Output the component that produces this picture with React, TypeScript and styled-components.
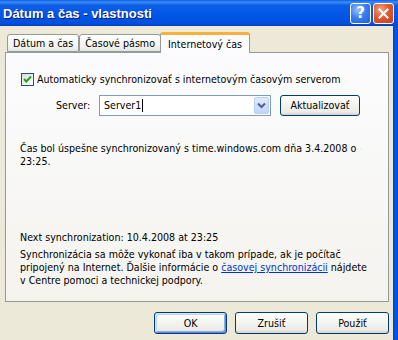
import React from "react";
import styled, { createGlobalStyle } from "styled-components";

const Global = createGlobalStyle`
  html, body { margin: 0; padding: 0; background: #ece9d8; }
  body { font-family: "DejaVu Sans Condensed", "DejaVu Sans", sans-serif; font-stretch: condensed; font-size: 10.6px; color: #000; }
`;

const Window = styled.div`
  width: 398px;
  height: 340px;
  display: flex;
  flex-direction: column;
  overflow: hidden;
`;

const TitleBar = styled.div`
  height: 26px;
  flex: none;
  display: flex;
  align-items: center;
  padding: 0 4px 0 3px;
  background: linear-gradient(#0a5fe6 0%, #3d8cf8 8%, #0d5fe8 20%, #0055e5 60%, #0050dc 90%, #003fc4 100%);
`;

const Title = styled.div`
  flex: 1;
  color: #fff;
  font-family: "Liberation Sans", sans-serif;
  font-stretch: normal;
  font-weight: bold;
  font-size: 13px;
  text-shadow: 1px 1px 0 #0a1883;
  padding-top: 1px;
`;

const CaptionButton = styled.div<{ $red?: boolean }>`
  width: 21px;
  height: 21px;
  box-sizing: border-box;
  margin-left: 2px;
  border: 1px solid #fff;
  border-radius: 3px;
  display: flex;
  align-items: center;
  justify-content: center;
  background: ${(p) =>
    p.$red
      ? "radial-gradient(circle at 35% 30%, #f0a58a 0%, #e0582e 45%, #c8401a 100%)"
      : "radial-gradient(circle at 35% 30%, #9cc0fb 0%, #3c7df2 45%, #1d5fe0 100%)"};
  color: #fff;
  font-family: "DejaVu Sans", sans-serif;
  font-stretch: normal;
  font-weight: bold;
  font-size: 15px;
`;

const Client = styled.div`
  flex: 1;
  display: flex;
  flex-direction: column;
  padding: 6px 5px 0 5px;
  border-right: 4px solid #0054e3;
  box-shadow: inset -1px 0 0 #0a3fb8;
`;

const TabStrip = styled.div`
  display: flex;
  align-items: flex-end;
  height: 20px;
  padding-left: 2px;
  position: relative;
  z-index: 1;
`;

const Tab = styled.div<{ $active?: boolean }>`
  box-sizing: border-box;
  height: ${(p) => (p.$active ? "21px" : "18px")};
  margin-bottom: ${(p) => (p.$active ? "-1px" : "0")};
  padding: ${(p) => (p.$active ? "3px 7px 0 7px" : "2px 5px 0 5px")};
  margin-left: ${(p) => (p.$active ? "-1px" : "0")};
  margin-right: ${(p) => (p.$active ? "-1px" : "0")};
  border: 1px solid #919b9c;
  border-bottom: ${(p) => (p.$active ? "none" : "1px solid #919b9c")};
  border-top: ${(p) => (p.$active ? "3px solid #f9b03a" : "1px solid #919b9c")};
  border-radius: 3px 3px 0 0;
  background: ${(p) =>
    p.$active ? "#fcfcfe" : "linear-gradient(#ffffff, #f3f3ef 70%, #e6e5de)"};
  white-space: nowrap;
  line-height: 13px;
`;

const Panel = styled.div`
  box-sizing: border-box;
  height: 250px;
  border: 1px solid #919b9c;
  background: linear-gradient(#fcfcfe, #f4f3ee);
  display: flex;
  flex-direction: column;
  padding: 20px 14px 14px 14px;
  line-height: 13px;
  white-space: nowrap;
`;

const CheckRow = styled.div`
  display: flex;
  align-items: center;
  gap: 3px;
  margin-left: 1px;
`;

const CheckBox = styled.div`
  width: 13px;
  height: 13px;
  box-sizing: border-box;
  border: 1px solid #1c5180;
  background: linear-gradient(135deg, #dcdcd7, #ffffff);
  display: flex;
  align-items: center;
  justify-content: center;
`;

const ServerRow = styled.div`
  display: flex;
  align-items: center;
  margin-top: 9px;
  padding-left: 36px;
`;

const Label = styled.span`
  width: 43px;
`;

const Combo = styled.div`
  box-sizing: border-box;
  width: 172px;
  height: 21px;
  border: 1px solid #7f9db9;
  background: #fff;
  display: flex;
  align-items: center;
  padding: 1px;
`;

const ComboText = styled.div`
  flex: 1;
  padding-left: 3px;
  display: flex;
  align-items: center;
`;

const Caret = styled.span`
  display: inline-block;
  width: 1px;
  height: 13px;
  background: #000;
  margin-left: 1px;
`;

const DropButton = styled.div`
  width: 15px;
  height: 17px;
  border: 1px solid #b9cdf5;
  border-radius: 2px;
  background: linear-gradient(#e0eafd, #c3d3fd);
  display: flex;
  align-items: center;
  justify-content: center;
  box-sizing: border-box;
`;

const Button = styled.div<{ $default?: boolean; $width?: number; $height?: number; $gap?: number }>`
  box-sizing: border-box;
  width: ${(p) => p.$width ?? 73}px;
  height: ${(p) => p.$height ?? 22}px;
  margin-left: ${(p) => p.$gap ?? 0}px;
  border: 1px solid #003c74;
  border-radius: 3px;
  background: linear-gradient(#ffffff, #f4f4f0 45%, #ecebe6 85%, #d6d0c5);
  display: flex;
  align-items: center;
  justify-content: center;
  box-shadow: ${(p) =>
    p.$default
      ? "inset 1px 1px 0 #cee7ff, inset -1px -1px 0 #6982ee, inset 2px 2px 0 #bcd4f6, inset -2px -2px 0 #89ade4"
      : "none"};
`;

const Status = styled.div`
  margin-top: 26px;
`;

const NextSync = styled.div`
  margin-top: auto;
`;

const Info = styled.div`
  margin-top: 4px;
`;

const Link = styled.a`
  color: #0033cc;
  text-decoration: underline;
`;

const Footer = styled.div`
  display: flex;
  justify-content: flex-end;
  gap: 8px;
  margin-top: 10px;
`;

export default function App() {
  return (
    <Window>
      <Global />
      <TitleBar>
        <Title>Dátum a čas - vlastnosti</Title>
        <CaptionButton>?</CaptionButton>
        <CaptionButton $red>
          <svg width="11" height="11" viewBox="0 0 11 11">
            <path d="M1.5 1.5 L9.5 9.5 M9.5 1.5 L1.5 9.5" stroke="#fff" strokeWidth="2" strokeLinecap="square" />
          </svg>
        </CaptionButton>
      </TitleBar>
      <Client>
        <TabStrip>
          <Tab>Dátum a čas</Tab>
          <Tab>Časové pásmo</Tab>
          <Tab $active>Internetový čas</Tab>
        </TabStrip>
        <Panel>
          <CheckRow>
            <CheckBox>
              <svg width="9" height="9" viewBox="0 0 9 9">
                <path d="M1 4 L3.3 6.5 L8 1.5" stroke="#21a121" strokeWidth="2" fill="none" />
              </svg>
            </CheckBox>
            <span>Automaticky synchronizovať s internetovým časovým serverom</span>
          </CheckRow>
          <ServerRow>
            <Label>Server:</Label>
            <Combo>
              <ComboText>
                Server1
                <Caret />
              </ComboText>
              <DropButton>
                <svg width="9" height="7" viewBox="0 0 9 7">
                  <path d="M1 1.5 L4.5 5 L8 1.5" stroke="#4d6185" strokeWidth="2" fill="none" />
                </svg>
              </DropButton>
            </Combo>
            <Button $width={80} $height={21} $gap={9}>
              Aktualizovať
            </Button>
          </ServerRow>
          <Status>
            Čas bol úspešne synchronizovaný s time.windows.com dňa 3.4.2008 o
            <br />
            23:25.
          </Status>
          <NextSync>Next synchronization: 10.4.2008 at 23:25</NextSync>
          <Info>
            Synchronizácia sa môže vykonať iba v takom prípade, ak je počítač
            <br />
            pripojený na Internet. Ďalšie informácie o <Link>časovej synchronizácii</Link> nájdete
            <br />v Centre pomoci a technickej podpory.
          </Info>
        </Panel>
        <Footer>
          <Button $default>OK</Button>
          <Button>Zrušiť</Button>
          <Button>Použiť</Button>
        </Footer>
      </Client>
    </Window>
  );
}
